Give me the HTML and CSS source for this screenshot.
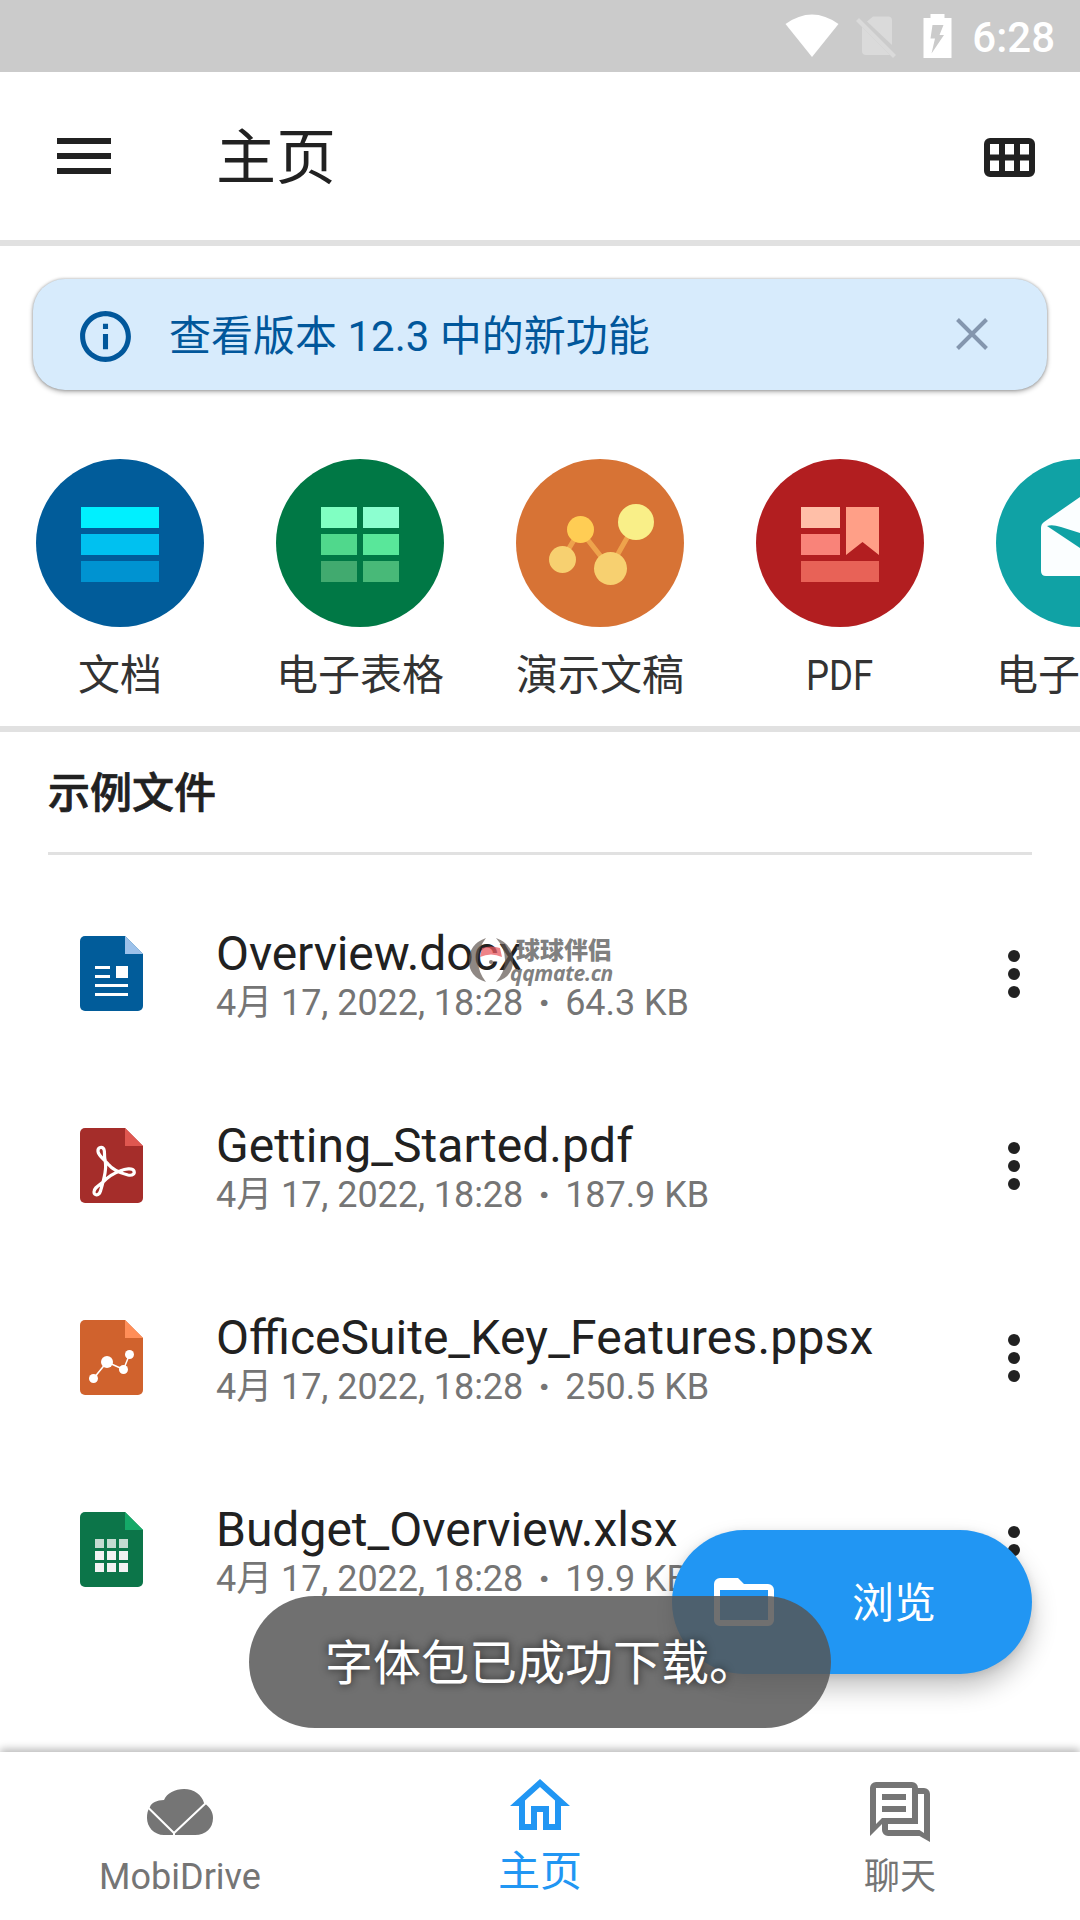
FILE: index.html
```html
<!DOCTYPE html>
<html lang="zh-CN">
<head>
<meta charset="utf-8">
<title>主页</title>
<link rel="stylesheet" href="styles.css">
</head>
<body>
<div class="app">
  <div class="status">
    <svg class="wifi" width="54" height="44" viewBox="0 0 54 44"><path fill="#fff" d="M0.500 10Q27 -9 53.500 10L27 43z"/></svg>
    <svg class="sim" width="41" height="43" viewBox="0 0 41 43"><g fill="#dadada"><path d="M11 5.500L17 0.500H32a4 4 0 0 1 4 4V29z"/><path d="M6 11L34 39H10a4 4 0 0 1-4-4z"/><path d="M0 5L3 2L40 39L37 42z"/></g></svg>
    <svg class="battery" width="29" height="44" viewBox="0 0 29 44"><path fill="#fff" d="M7.500 0h14v4h7v40h-28V4h7z"/><path fill="#cbcbcb" d="M9.500 11h11l-4 10h4.500L8.500 39.500 12 24.500H7.500z"/></svg>
    <span class="clock">6:28</span>
  </div>

  <header class="appbar">
    <svg width="54" height="36" viewBox="0 0 54 36"><path fill="#212121" d="M0 0h54v6H0zM0 15h54v6H0zM0 30h54v6H0z"/></svg>
    <h1>主页</h1>
    <svg width="51" height="39" viewBox="0 0 51 39"><path fill="#212121" fill-rule="evenodd" d="M6 0h39a6 6 0 0 1 6 6v27a6 6 0 0 1-6 6H6a6 6 0 0 1-6-6V6a6 6 0 0 1 6-6zM6 6v10.500h9V6zM21 6v10.500h9V6zM36 6v10.500h9V6zM6 22.500V33h9V22.500zM21 22.500V33h9V22.500zM36 22.500V33h9V22.500z"/></svg>
  </header>

  <div class="banner">
    <svg class="about" width="61" height="61" viewBox="0 0 24 24"><path fill="#01579b" d="M11 7h2v2h-2zm0 4h2v6h-2zm1-9C6.480 2 2 6.480 2 12s4.480 10 10 10 10-4.480 10-10S17.520 2 12 2zm0 18c-4.410 0-8-3.590-8-8s3.590-8 8-8 8 3.590 8 8-3.590 8-8 8z"/></svg>
    <span class="banner-text">查看版本 12.3 中的新功能</span>
    <svg class="close" width="32" height="32" viewBox="0 0 32 32"><path stroke="#8496ae" stroke-width="4" d="M1.500 1.500l29 29M30.500 1.500l-29 29"/></svg>
  </div>

  <nav class="modules">
    <div class="module">
      <svg width="168" height="168" viewBox="0 0 168 168"><circle cx="84" cy="84" r="84" fill="#015c9a"/><path fill="#00f0ff" d="M45 48h78v21H45z"/><path fill="#00c1f0" d="M45 75h78v21H45z"/><path fill="#0093d1" d="M45 102h78v21H45z"/></svg>
      <span>文档</span>
    </div>
    <div class="module">
      <svg width="168" height="168" viewBox="0 0 168 168"><circle cx="84" cy="84" r="84" fill="#007845"/><path fill="#80ffc2" d="M45 48h36v21H45z"/><path fill="#8cffd0" d="M87 48h36v21H87z"/><path fill="#50d88c" d="M45 75h36v21H45z"/><path fill="#59e79a" d="M87 75h36v21H87z"/><path fill="#41aa6f" d="M45 102h36v21H45z"/><path fill="#48b978" d="M87 102h36v21H87z"/></svg>
      <span>电子表格</span>
    </div>
    <div class="module">
      <svg width="168" height="168" viewBox="0 0 168 168"><circle cx="84" cy="84" r="84" fill="#d77335"/><path fill="none" stroke="#eea34c" stroke-width="5" d="M46 101L64 71L94 109L120 63"/><circle cx="64.500" cy="70.500" r="13.500" fill="#ffcd54"/><circle cx="46.500" cy="100.500" r="13.500" fill="#f7d070"/><circle cx="94.500" cy="109.500" r="16.500" fill="#f7d070"/><circle cx="120" cy="63" r="18" fill="#f9ef88"/></svg>
      <span>演示文稿</span>
    </div>
    <div class="module">
      <svg width="168" height="168" viewBox="0 0 168 168"><circle cx="84" cy="84" r="84" fill="#b21e20"/><path fill="#ffbfa8" d="M45 48h39v21H45z"/><path fill="#f98379" d="M45 75h39v21H45z"/><path fill="#e86257" d="M45 102h78v21H45z"/><path fill="#ff9f87" d="M90 48h33v48l-16.500-13L90 96z"/></svg>
      <span class="condensed">PDF</span>
    </div>
    <div class="module">
      <svg width="168" height="168" viewBox="0 0 168 168"><circle cx="84" cy="84" r="84" fill="#10a2a5"/><path fill="#fbfeff" d="M45 69q0-4 3-6L84 38l36 25q3 2 3 6v43q0 5-5 5H50q-5 0-5-5z"/><path fill="#10a2a5" d="M51 67q5-2 14 1l19 6 19-6q9-3 14-1L84 89z"/></svg>
      <span>电子邮件</span>
    </div>
  </nav>

  <main class="files">
    <h2>示例文件</h2>
    <div class="row">
      <svg class="type" width="63" height="75" viewBox="0 0 63 75"><path fill="#015c9a" d="M5 0h40l18 18v52a5 5 0 0 1-5 5H5a5 5 0 0 1-5-5V5a5 5 0 0 1 5-5z"/><path fill="#9cc1ea" d="M45 0l18 18H45z"/><path fill="#fff" d="M15 30h15v3H15zM15 39h15v3H15zM36 30h12v12H36zM15 48h33v3H15zM15 57h33v3H15z"/></svg>
      <div class="info"><div class="name tight">Overview.docx</div><div class="meta">4月 17, 2022, 18:28<i>·</i>64.3 KB</div></div>
      <svg class="more" width="12" height="48" viewBox="0 0 12 48"><g fill="#212121"><circle cx="6" cy="6" r="6"/><circle cx="6" cy="24" r="6"/><circle cx="6" cy="42" r="6"/></g></svg>
      <div class="mark">
        <svg width="44" height="46" viewBox="0 0 44 46"><path fill="#605650" fill-opacity=".7" d="M17 1Q0 7 0 24 0 40 17 45 9 35 9 23 9 11 17 1zM27 1Q44 7 44 24 44 40 27 45 36 35 36 23 36 11 27 1z"/><path fill="#e85a60" fill-opacity=".75" d="M13 11q9-3 18 0l2 9q-11-5-22 0z"/><circle cx="22" cy="25" r="2" fill="#8a7f7c"/></svg>
        <div class="mark-text"><b>球球伴侣</b><em>qqmate.cn</em></div>
      </div>
    </div>
    <div class="row">
      <svg class="type" width="63" height="75" viewBox="0 0 63 75"><path fill="#a52d2a" d="M5 0h40l18 18v52a5 5 0 0 1-5 5H5a5 5 0 0 1-5-5V5a5 5 0 0 1 5-5z"/><path fill="#df5750" d="M45 0l18 18H45z"/><path fill="none" stroke="#fff" stroke-width="3.200" stroke-linejoin="round" d="M25 32C24 27 25 24 24 21.500C22.500 18 17.500 19 18 23.500C18.500 28 25 32 28 36C32 41 40 45 48 47C53 48 55 45.500 54 43C52.500 39.500 45 41 40 43C34 45 28 49 23 54C18 58 14 60 14 64C14 68 19 68 20.500 63C22 58 24 51 25 45C26 39 26 36 25 32z"/></svg>
      <div class="info"><div class="name wide">Getting_Started.pdf</div><div class="meta">4月 17, 2022, 18:28<i>·</i>187.9 KB</div></div>
      <svg class="more" width="12" height="48" viewBox="0 0 12 48"><g fill="#212121"><circle cx="6" cy="6" r="6"/><circle cx="6" cy="24" r="6"/><circle cx="6" cy="42" r="6"/></g></svg>
    </div>
    <div class="row">
      <svg class="type" width="63" height="75" viewBox="0 0 63 75"><path fill="#d0622d" d="M5 0h40l18 18v52a5 5 0 0 1-5 5H5a5 5 0 0 1-5-5V5a5 5 0 0 1 5-5z"/><path fill="#ff8e58" d="M45 0l18 18H45z"/><path fill="none" stroke="#fff" stroke-width="1.500" d="M13.500 58.500L27 42L43.500 49.500L49.500 34.500"/><g fill="#fff"><circle cx="13.500" cy="58.500" r="4.500"/><circle cx="27" cy="42" r="6"/><circle cx="43.500" cy="49.500" r="4.500"/><circle cx="49.500" cy="34.500" r="4.500"/></g></svg>
      <div class="info"><div class="name">OfficeSuite<span class="wider">_Key_Features.ppsx</span></div><div class="meta">4月 17, 2022, 18:28<i>·</i>250.5 KB</div></div>
      <svg class="more" width="12" height="48" viewBox="0 0 12 48"><g fill="#212121"><circle cx="6" cy="6" r="6"/><circle cx="6" cy="24" r="6"/><circle cx="6" cy="42" r="6"/></g></svg>
    </div>
    <div class="row">
      <svg class="type" width="63" height="75" viewBox="0 0 63 75"><path fill="#0c7549" d="M5 0h40l18 18v52a5 5 0 0 1-5 5H5a5 5 0 0 1-5-5V5a5 5 0 0 1 5-5z"/><path fill="#14a968" d="M45 0l18 18H45z"/><path fill="#c4dbd1" d="M15 27h9v9h-9zM27 27h9v9h-9zM39 27h9v9h-9z"/><path fill="#f2f2f2" d="M15 39h9v9h-9zM27 39h9v9h-9zM39 39h9v9h-9zM15 51h9v9h-9zM27 51h9v9h-9zM39 51h9v9h-9z"/></svg>
      <div class="info"><div class="name">Budget_Overview.xlsx</div><div class="meta">4月 17, 2022, 18:28<i>·</i>19.9 KB</div></div>
      <svg class="more" width="12" height="48" viewBox="0 0 12 48"><g fill="#212121"><circle cx="6" cy="6" r="6"/><circle cx="6" cy="24" r="6"/><circle cx="6" cy="42" r="6"/></g></svg>
    </div>
  </main>

  <footer class="tabs">
    <div class="tab">
      <svg width="72" height="72" viewBox="0 0 72 72"><path fill="#757575" d="M20 59C10 59 3 51 3 42C3 38 3.500 34 6 31C7 27 13 24 20 24C23 17 31 13 40 13C50 13 58 19 60 27C66 31 69 36 69 42C69 52 62 59 51 59z"/><path fill="none" stroke="#fff" stroke-width="2" d="M2 29.500L30 57L64 25M30 56v5"/></svg>
      <span>MobiDrive</span>
    </div>
    <div class="tab active">
      <svg width="72" height="72" viewBox="0 0 24 24"><path fill="#2196f3" d="M12 5.690l5 4.500V18h-2v-6H9v6H7v-7.810l5-4.500M12 3L2 12h3v8h6v-6h2v6h6v-8h3L12 3"/></svg>
      <span>主页</span>
    </div>
    <div class="tab">
      <svg width="72" height="72" viewBox="0 0 24 24"><path fill="#757575" d="M6 6h8v2H6zM6 10h8v2H6z"/><path fill="#757575" fill-rule="evenodd" d="M4 2h12a2 2 0 0 1 2 2v12H6l-4 4V4a2 2 0 0 1 2-2zM4 4v12l2-2h10V4z"/><path fill="#757575" d="M18 4h2a2 2 0 0 1 2 2v16l-3.500-2H8a2 2 0 0 1-2-2v-2h2v2h10.500l1.500 1V6h-2z"/></svg>
      <span>聊天</span>
    </div>
  </footer>

  <button class="fab">
    <svg width="60" height="48" viewBox="0 0 60 48"><path fill="#fff" fill-rule="evenodd" d="M6 0h18l6 6h24a6 6 0 0 1 6 6v30a6 6 0 0 1-6 6H6a6 6 0 0 1-6-6V6a6 6 0 0 1 6-6zM6 12v30h48V12z"/></svg>
    <span>浏览</span>
  </button>
  <div class="toast">字体包已成功下载。</div>
</div>
</body>
</html>
```
FILE: styles.css
```css
* { box-sizing: border-box; margin: 0; padding: 0; }
body { background: #fff; font-family: Roboto, "Noto Sans CJK SC", sans-serif; color: #212121; }
svg { display: block; flex: none; }
.app { position: relative; width: 1080px; height: 1920px; overflow: hidden; display: flex; flex-direction: column; }

.status { height: 72px; flex: none; background: #cbcbcb; display: flex; align-items: flex-start; justify-content: flex-end; padding: 14px 25px 0 0; }
.sim { margin: 2px 0 0 17px; }
.battery { margin-left: 26px; }
.clock { margin: 1px 0 0 20px; color: #fff; font-size: 42px; font-weight: 500; line-height: 46px; }

.appbar { height: 174px; flex: none; border-bottom: 6px solid #e1e1e1; display: flex; align-items: center; padding: 0 45px 0 57px; }
.appbar h1 { flex: 1; margin: 5px 0 0 105px; font-size: 60px; font-weight: 400; line-height: 88px; }
.appbar svg:last-child { margin-top: 3px; }

.banner { height: 111px; flex: none; margin: 33px 33px 0; padding: 0 59px 0 42px; border-radius: 32px; background: #d7ebfc; box-shadow: 0 2px 5px rgba(0,0,0,.3), 0 0 3px rgba(0,0,0,.28); display: flex; align-items: center; }
.about { margin-top: 4px; }
.banner-text { flex: 1; margin: 4px 0 0 33px; font-size: 42px; line-height: 60px; color: #01579b; }
.close { margin-top: -1px; }

.modules { height: 342px; flex: none; border-bottom: 6px solid #e1e1e1; padding-top: 69px; display: grid; grid-template-columns: repeat(5, 240px); overflow: hidden; }
.module { display: flex; flex-direction: column; align-items: center; font-size: 42px; line-height: 60px; color: #333; }
.module span { margin-top: 19px; white-space: nowrap; }
.module .condensed { transform: scaleX(.87); }

.files { flex: 1; padding: 0 48px; }
.files h2 { height: 123px; border-bottom: 3px solid #e1e1e1; font-size: 42px; font-weight: 500; line-height: 123px; -webkit-text-stroke: .7px #212121; }
.row { position: relative; height: 192px; display: flex; padding: 81px 12px 0 32px; }
.info { flex: 1; margin: -10px 0 0 73px; white-space: nowrap; }
.name { font-size: 48px; line-height: 56px; }
.tight { letter-spacing: -.12px; }
.wide { letter-spacing: .07px; }
.wider { letter-spacing: .2px; }
.meta { font-size: 36px; line-height: 42px; color: #757575; letter-spacing: -.06px; }
.meta i { display: inline-block; width: 42px; text-align: center; font-style: normal; font-weight: 900; }
.more { margin-top: 14px; }

.mark { position: absolute; left: 421px; top: 82px; display: flex; }
.mark-text { padding-top: 2px; color: #808080; font-size: 24px; line-height: 25px; }
.mark-text b, .mark-text em { display: block; font-weight: 900; white-space: nowrap; }
.mark-text b { margin-left: 3px; }
.mark-text em { margin-left: -3px; font-family: "Open Sans", sans-serif; font-weight: 700; font-size: 21px; line-height: 18px; letter-spacing: -.3px; }

.tabs { height: 168px; flex: none; background: #fff; box-shadow: 0 -3px 8px rgba(0,0,0,.28); display: grid; grid-template-columns: repeat(3, 360px); position: relative; }
.tab { display: flex; flex-direction: column; align-items: center; padding-top: 24px; color: #757575; font-size: 36px; line-height: 52px; }
.tab span { margin-top: 3px; }
.tab.active { padding-top: 18px; color: #2196f3; font-size: 42px; line-height: 60px; }
.tab.active span { margin-top: 0; }

.fab { position: absolute; left: 672px; top: 1530px; width: 360px; height: 144px; border: 0; border-radius: 72px; background: #2196f3; color: #fff; font: 42px/60px Roboto, "Noto Sans CJK SC", sans-serif; display: flex; align-items: center; padding-left: 42px; box-shadow: 0 14px 26px rgba(0,0,0,.24), 0 2px 8px rgba(0,0,0,.1); }
.fab span { margin: 3px 0 0 78px; }
.toast { position: absolute; left: 249px; top: 1596px; width: 582px; height: 132px; padding-left: 2px; border-radius: 66px; background: rgba(85,85,85,.842); color: #fff; font-size: 48px; line-height: 136px; text-align: center; text-shadow: 0 0 8px rgba(0,0,0,.73); }
```
